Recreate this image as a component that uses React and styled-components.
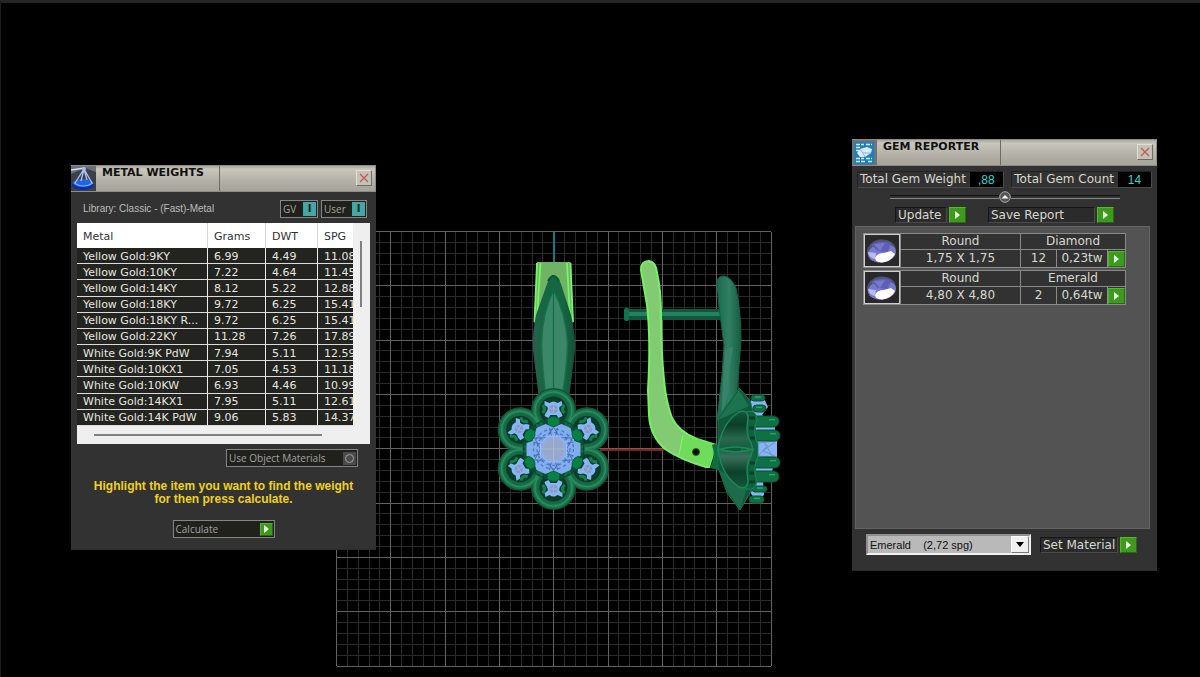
import React, {useState} from 'react'
import styled, {createGlobalStyle} from 'styled-components'

const GlobalStyle = createGlobalStyle`
    * {
        box-sizing: border-box;
    }
    body {
        margin: 0;
        background: #000;
    }
    button {
        margin: 0;
        padding: 0;
        border: 0;
        cursor: pointer;
    }
`

const verdana = '"DejaVu Sans", Verdana, sans-serif'
const arial = '"Liberation Sans", Arial, sans-serif'
const tahoma = '"Open Sans", Tahoma, sans-serif'

const Desktop = styled.main`
    position: relative;
    min-height: 100vh;
    overflow: hidden;
    background: #000;
    border-top: 3px solid #262626;
    border-left: 1px solid #1c1c1c;
    font-family: ${verdana};
    font-size: 12px;
    color: #d8d8d0;
`

const Viewport = styled.svg`
    position: absolute;
    left: 329px;
    top: 222px;
    width: 460px;
    height: 450px;
`

const Window = styled.section`
    position: absolute;
    left: ${p => p.$x}px;
    top: ${p => p.$y}px;
    width: ${p => p.$width}px;
    background: #323232;
    border-bottom: 1px solid #2a2a2a;
`

const TitleBar = styled.header`
    display: flex;
    height: 27px;
    background: linear-gradient(#a9a79e 0, #c9c6bc 3px, #b3b1a7 60%, #a5a39a 100%);
    border: 1px solid #8f8d86;
    border-left: 0;
`

const TitleIcon = styled.svg`
    width: 25px;
    height: 25px;
    flex: none;
`

const Title = styled.h1`
    width: 124px;
    margin: 0;
    padding-left: 6px;
    border-right: 1px solid #6d6b66;
    font-size: 11px;
    line-height: 14px;
    font-weight: bold;
    color: #111;
    white-space: nowrap;
`

const CloseButton = styled.button`
    display: flex;
    align-items: center;
    justify-content: center;
    width: 16px;
    height: 16px;
    margin: 4px 3px 0 auto;
    background: #c4c1b8;
    border: 1px solid #e2dfd6;
    border-right-color: #6e6c66;
    border-bottom-color: #6e6c66;
`

const WindowTitle = ({icon, children}) => (
    <TitleBar>
        {icon}
        <Title>{children}</Title>
        <CloseButton aria-label="Close">
            <svg width="10" height="10" viewBox="0 0 10 10">
                <path d="M1 1L9 9M9 1L1 9" stroke="#c05c58" strokeWidth="1.3" />
            </svg>
        </CloseButton>
    </TitleBar>
)

const GreenArrow = styled.span`
    display: flex;
    align-items: center;
    justify-content: center;
    flex: none;
    width: ${p => (p.$small ? 13 : 17)}px;
    height: ${p => (p.$small ? 13 : 16)}px;
    background: #3d9a1c;
    border: 1px solid #58b534;
    border-right-color: #256b10;
    border-bottom-color: #256b10;
`

const Arrow = ({small}) => (
    <GreenArrow $small={small}>
        <svg width="5" height="8" viewBox="0 0 5 8">
            <path d="M0 0L5 4L0 8Z" fill="#eaffdf" />
        </svg>
    </GreenArrow>
)

// metal weights

const MetalBody = styled.div`
    padding: 8px 6px 11px;
`

const LibraryRow = styled.div`
    display: flex;
    align-items: center;
    gap: 3px;
    height: 17px;
    margin-bottom: 6px;
    padding: 0 3px 0 6px;
    font-family: ${arial};
    font-size: 10px;
    color: #bdbdbd;
`

const LibraryName = styled.span`
    flex: 1;
`

const BoxButton = styled.button`
    display: flex;
    align-items: center;
    justify-content: space-between;
    width: ${p => p.$width}px;
    height: 18px;
    padding: 0 1px 0 2px;
    background: #20201d;
    border: 1px solid #858585;
    font-family: ${tahoma};
    font-size: 10px;
    line-height: 14px;
    color: #a3a3a3;
`

const ToggleMark = styled.span`
    width: 13px;
    height: 14px;
    background: #43a7a2;
    color: #0b2220;
    font-family: ${verdana};
    font-weight: bold;
    text-align: center;
`

const RoundMark = styled.span`
    display: flex;
    align-items: center;
    justify-content: center;
    width: 13px;
    height: 13px;
    background: #4b4b4b;
    &::before {
        content: '';
        width: 7px;
        height: 7px;
        border: 1px solid #a0a0a0;
        border-radius: 50%;
    }
`

const TableFrame = styled.div`
    display: grid;
    grid-template-columns: 1fr 17px;
    grid-template-rows: 203px 18px;
    background: #efefef;
`

const TableClip = styled.div`
    overflow: hidden;
`

const MetalTable = styled.table`
    width: 299px;
    height: 203px;
    table-layout: fixed;
    border-collapse: separate;
    border-spacing: 0;
    font-size: 11px;
    line-height: 13px;
    th {
        height: 25px;
        padding: 2px 0 0 6px;
        background: #fff;
        border-right: 1px solid #d5d5d5;
        font-weight: normal;
        text-align: left;
        color: #333;
    }
    td {
        padding: 1px 4px 0 6px;
        overflow: hidden;
        text-overflow: ellipsis;
        white-space: nowrap;
        background: #23231f;
        border-right: 1px solid #ececec;
        border-bottom: 1px solid #dcdcdc;
        color: #e6e6e0;
    }
`

const VerticalBar = styled.div`
    width: 2px;
    height: 66px;
    margin: 18px 0 0 7px;
    background: #808080;
`

const HorizontalBar = styled.div`
    width: 228px;
    height: 2px;
    margin: 8px 0 0 17px;
    background: #808080;
`

const OptionRow = styled.div`
    display: flex;
    justify-content: flex-end;
    padding: 5px 12px 0 0;
`

const Hint = styled.p`
    margin: 13px 0 14px;
    font-family: ${arial};
    font-size: 12px;
    line-height: 13px;
    font-weight: bold;
    text-align: center;
    color: #f0d21c;
`

const CalculateRow = styled.div`
    display: flex;
    justify-content: center;
`

const metals = [
    ['Yellow Gold:9KY', '6.99', '4.49', '11.08'],
    ['Yellow Gold:10KY', '7.22', '4.64', '11.45'],
    ['Yellow Gold:14KY', '8.12', '5.22', '12.88'],
    ['Yellow Gold:18KY', '9.72', '6.25', '15.41'],
    ['Yellow Gold:18KY R...', '9.72', '6.25', '15.41'],
    ['Yellow Gold:22KY', '11.28', '7.26', '17.89'],
    ['White Gold:9K PdW', '7.94', '5.11', '12.59'],
    ['White Gold:10KX1', '7.05', '4.53', '11.18'],
    ['White Gold:10KW', '6.93', '4.46', '10.99'],
    ['White Gold:14KX1', '7.95', '5.11', '12.61'],
    ['White Gold:14K PdW', '9.06', '5.83', '14.37'],
]

const ScaleIcon = () => (
    <TitleIcon viewBox="0 0 25 25">
        <rect width="25" height="25" fill="#3d4147" />
        <path d="M0 0H25V6L14 2L0 8Z" fill="#6b7078" />
        <ellipse cx="12" cy="19" rx="11" ry="5" fill="#0b2fa8" />
        <ellipse cx="12" cy="17" rx="10" ry="4" fill="#2462ee" />
        <path d="M3 17Q12 23 22 17" stroke="#79b0ff" strokeWidth="1.2" fill="none" />
        <path d="M13 3L4 17M13 3L21 17M13 3L10 15M13 3L16 14" stroke="#a9c6f2" strokeWidth="1.3" fill="none" />
        <path d="M0 4L14 2" stroke="#cfe0f5" strokeWidth="1.5" />
        <circle cx="13" cy="3" r="2" fill="#9fbdf0" />
    </TitleIcon>
)

const MetalWeights = () => (
    <Window $x={70} $y={162} $width={305}>
        <WindowTitle icon={<ScaleIcon />}>METAL WEIGHTS</WindowTitle>
        <MetalBody>
            <LibraryRow>
                <LibraryName>Library: Classic - (Fast)-Metal</LibraryName>
                <BoxButton $width={38}>
                    GV <ToggleMark>I</ToggleMark>
                </BoxButton>
                <BoxButton $width={46}>
                    User <ToggleMark>I</ToggleMark>
                </BoxButton>
            </LibraryRow>
            <TableFrame>
                <TableClip>
                    <MetalTable>
                        <colgroup>
                            <col width="131" />
                            <col width="58" />
                            <col width="52" />
                            <col width="58" />
                        </colgroup>
                        <thead>
                            <tr>
                                <th>Metal</th>
                                <th>Grams</th>
                                <th>DWT</th>
                                <th>SPG</th>
                            </tr>
                        </thead>
                        <tbody>
                            {metals.map(row => (
                                <tr key={row[0]}>
                                    {row.map((cell, i) => <td key={i}>{cell}</td>)}
                                </tr>
                            ))}
                        </tbody>
                    </MetalTable>
                </TableClip>
                <VerticalBar />
                <HorizontalBar />
            </TableFrame>
            <OptionRow>
                <BoxButton $width={132}>
                    Use Object Materials <RoundMark />
                </BoxButton>
            </OptionRow>
            <Hint>
                Highlight the item you want to find the weight
                <br />
                for then press calculate.
            </Hint>
            <CalculateRow>
                <BoxButton $width={102}>
                    Calculate <Arrow small />
                </BoxButton>
            </CalculateRow>
        </MetalBody>
    </Window>
)

// gem reporter

const GemBody = styled.div`
    padding: 5px 7px 15px 3px;
`

const Totals = styled.dl`
    display: flex;
    justify-content: space-between;
    margin: 0 -2px 0 2px;
`

const Total = styled.div`
    display: flex;
    height: 17px;
    border: 1px solid #222;
    border-right-color: #4a4a4a;
    border-bottom-color: #4a4a4a;
    line-height: 14px;
    white-space: nowrap;
    dt {
        padding: 0 4px 0 2px;
    }
    dd {
        width: 33px;
        margin: 0;
        background: #000;
        font-family: ${arial};
        line-height: 16px;
        text-align: center;
        color: #35d6cf;
    }
`

const Divider = styled.div`
    display: flex;
    align-items: center;
    height: 12px;
    margin: 3px 30px 4px 35px;
    &::before,
    &::after {
        content: '';
        flex: 1;
        height: 2px;
        border-top: 1px solid #111;
        border-bottom: 1px solid #888;
    }
`

const Collapse = styled.button`
    display: flex;
    width: 12px;
    height: 12px;
    background: none;
`

const Actions = styled.div`
    display: flex;
    gap: 22px;
    padding-left: 40px;
    margin-bottom: 3px;
`

const LabelButton = styled.button`
    display: flex;
    align-items: center;
    gap: 2px;
    background: none;
    font-family: ${verdana};
    font-size: 12px;
    color: #d8d8d0;
`

const LabelText = styled.span`
    width: ${p => p.$width}px;
    height: 16px;
    padding-left: 2px;
    background: #2b2b2b;
    border: 1px solid #4a4a4a;
    border-top-color: #161616;
    border-left-color: #161616;
    line-height: 14px;
    text-align: left;
    white-space: nowrap;
`

const GemList = styled.div`
    display: flex;
    flex-direction: column;
    gap: 2px;
    min-height: 303px;
    padding: 6px 7px;
    background: #535353;
    border: 1px solid #636363;
`

const GemTable = styled.table`
    width: 262px;
    table-layout: fixed;
    border-collapse: collapse;
    line-height: 15px;
    td {
        height: 16px;
        padding: 0;
        border: 1px solid #8a8a8a;
        background: #323232;
        text-align: center;
        white-space: nowrap;
    }
`

const GemThumb = styled.svg`
    display: block;
    width: 36px;
    height: 33px;
    outline: 1px solid #d0d0d0;
    outline-offset: -1px;
`

const ShowButton = styled.button`
    display: block;
    background: none;
`

const MaterialRow = styled.div`
    display: flex;
    align-items: center;
    gap: 9px;
    padding: 5px 0 0 11px;
`

const SelectFrame = styled.div`
    position: relative;
    width: 165px;
    height: 21px;
    border: 2px solid #8f8f8f;
    border-right-color: #f2f2f2;
    border-bottom-color: #f2f2f2;
`

const MaterialSelect = styled.select`
    appearance: none;
    display: block;
    width: 100%;
    height: 17px;
    padding: 0 20px 0 2px;
    border: 0;
    border-radius: 0;
    background: #b9b9b9;
    font-family: ${arial};
    font-size: 11px;
    color: #111;
`

const SelectArrow = styled.span`
    position: absolute;
    top: 0;
    right: 0;
    display: flex;
    align-items: center;
    justify-content: center;
    width: 18px;
    height: 17px;
    background: #f0f0f0;
    border: 1px solid #fff;
    border-right-color: #777;
    border-bottom-color: #777;
    pointer-events: none;
`

const gems = [
    {shape: 'Round', size: '1,75 X 1,75', material: 'Diamond', count: 12, weight: '0,23tw'},
    {shape: 'Round', size: '4,80 X 4,80', material: 'Emerald', count: 2, weight: '0,64tw'},
]

const ReportIcon = () => (
    <TitleIcon viewBox="0 0 25 25">
        <rect width="25" height="25" fill="#6f7276" />
        <rect x="2" y="2" width="20" height="22" fill="#1f7fb8" />
        <path
            d="M4 4.500H12M4 7.500H9M14 4.500H20M4 10.500H7M4 18.500H12M4 21.500H14M14 18.500H20M16 21.500H20"
            stroke="#cdeaf8"
            strokeWidth="1.600"
            strokeDasharray="4 1"
        />
        <path d="M5 13L8 9L15 7L20 9L19 13L13 17L8 17Z" fill="#dcebf2" />
        <path d="M8 9L11 13L19 13M11 13L13 17" stroke="#8fb6ca" fill="none" />
    </TitleIcon>
)

const Gem = () => (
    <GemThumb viewBox="0 0 36 33">
        <rect width="36" height="33" fill="#292929" />
        <ellipse cx="17.500" cy="17" rx="14.500" ry="11.500" fill="#50526f" transform="rotate(-8 17.500 17)" />
        <ellipse cx="18" cy="19" rx="14" ry="9.500" fill="#7679cc" transform="rotate(-8 18 19)" />
        <path d="M7 11Q16 5 27 9L24 18L14 17Z" fill="#5d60b4" />
        <path d="M10 10L16 17L21 9" fill="#7679cc" />
        <path d="M4 18L12 19L11 25Q5 24 4 18Z" fill="#b8bbf2" />
        <path d="M11 24Q13 19 20 19L27 17L31 20Q28 27 18 28.500Q11 28 11 24Z" fill="#fff" />
    </GemThumb>
)

const GemReporter = () => {
    const [material, setMaterial] = useState('emerald')
    return (
        <Window $x={851} $y={136} $width={305}>
            <WindowTitle icon={<ReportIcon />}>GEM REPORTER</WindowTitle>
            <GemBody>
                <Totals>
                    <Total>
                        <dt>Total Gem Weight</dt>
                        <dd>,88</dd>
                    </Total>
                    <Total>
                        <dt>Total Gem Count</dt>
                        <dd>14</dd>
                    </Total>
                </Totals>
                <Divider>
                    <Collapse aria-label="Collapse">
                        <svg width="12" height="12" viewBox="0 0 12 12">
                            <circle cx="6" cy="6" r="5.300" fill="#555" stroke="#aaa" />
                            <path d="M2.500 7.500L6 4L9.500 7.500Z" fill="#fff" />
                        </svg>
                    </Collapse>
                </Divider>
                <Actions>
                    <LabelButton>
                        <LabelText $width={52}>Update</LabelText>
                        <Arrow />
                    </LabelButton>
                    <LabelButton>
                        <LabelText $width={107}>Save Report</LabelText>
                        <Arrow />
                    </LabelButton>
                </Actions>
                <GemList>
                    {gems.map(gem => (
                        <GemTable key={gem.material}>
                            <colgroup>
                                <col width="37" />
                                <col width="120" />
                                <col width="36" />
                                <col width="51" />
                                <col width="18" />
                            </colgroup>
                            <tbody>
                                <tr>
                                    <td rowSpan={2}><Gem /></td>
                                    <td>{gem.shape}</td>
                                    <td colSpan={3}>{gem.material}</td>
                                </tr>
                                <tr>
                                    <td>{gem.size}</td>
                                    <td>{gem.count}</td>
                                    <td>{gem.weight}</td>
                                    <td>
                                        <ShowButton aria-label={`Show ${gem.material}`}>
                                            <Arrow />
                                        </ShowButton>
                                    </td>
                                </tr>
                            </tbody>
                        </GemTable>
                    ))}
                </GemList>
                <MaterialRow>
                    <SelectFrame>
                        <MaterialSelect
                            aria-label="Material"
                            value={material}
                            onChange={e => setMaterial(e.target.value)}
                        >
                            <option value="emerald">{'Emerald\u00a0\u00a0\u00a0\u00a0(2,72 spg)'}</option>
                        </MaterialSelect>
                        <SelectArrow>
                            <svg width="8" height="5" viewBox="0 0 8 5">
                                <path d="M0 0H8L4 5Z" fill="#000" />
                            </svg>
                        </SelectArrow>
                    </SelectFrame>
                    <LabelButton>
                        <LabelText $width={78}>Set Material</LabelText>
                        <Arrow />
                    </LabelButton>
                </MaterialRow>
            </GemBody>
        </Window>
    )
}

// modelling viewport

const GRID_X = 336.5
const GRID_Y = 231.5
const GRID_SIZE = 434.5

const gridLines = Array.from({length: 41}, (_, i) => ({
    offset: Math.round((i * GRID_SIZE) / 40),
    major: i % 5 === 0,
})).sort((a, b) => a.major - b.major)

const Grid = () => (
    <g shapeRendering="crispEdges">
        {gridLines.map(({offset, major}) => (
            <path
                key={offset}
                d={`M${GRID_X + offset} ${GRID_Y}v${GRID_SIZE}M${GRID_X} ${GRID_Y + offset}h${GRID_SIZE}`}
                stroke={major ? '#636363' : '#2b2b2b'}
            />
        ))}
        <path d="M553.500 232V264" stroke="#167a84" strokeWidth="2" />
        <path d="M600 449.500H664" stroke="#8c1c1c" strokeWidth="2" />
    </g>
)

const angles = [0, 60, 120, 180, 240, 300]

const Lobes = ({r, ...rest}) =>
    angles.map(a => <circle key={a} cy="-38.500" r={r} transform={`rotate(${a})`} {...rest} />)

const Flower = () => (
    <g transform="translate(553.500 449)">
        <Lobes r={22.5} fill="#0f5637" />
        <Lobes r={21} fill="#1a744c" />
        <Lobes r={18.5} fill="none" stroke="#2b8d62" strokeWidth="1.500" />
        <Lobes r={16.5} fill="#146842" />
        <Lobes r={14} fill="#0a3c28" />
        <circle r="31" fill="#0d4c32" />
        {angles.map(a => (
            <g key={a} transform={`rotate(${a})`}>
                <path
                    d="M-9 -48L-4 -46Q0 -49 4 -46L8 -48L9 -44L6 -42Q5 -39 8 -36L9 -33L5 -31L3 -34H-3L-5 -31L-9 -33L-8 -36Q-5 -39 -6 -42L-9 -44Z"
                    fill="#86b6f6"
                />
                <circle cy="-40" r="4" fill="#8799c8" />
                <path d="M-4 -40H4M0 -44V-36" stroke="#a8c2ec" strokeWidth=".6" />
                <path d="M-11 -44Q-7 -40 -11 -36M11 -44Q7 -40 11 -36" stroke="#12804f" strokeWidth="3" fill="none" />
                <path d="M-14 -18L-12 -27M14 -18L12 -27" stroke="#146842" strokeWidth="3" />
            </g>
        ))}
        <path
            d="M-17 -21L-8 -25L0 -22L8 -25L17 -21L21 -8L27 -6V7L21 9L17 21L8 25L0 22L-8 25L-17 21L-21 9L-27 7V-6L-21 -8Z"
            fill="#7fadf0"
        />
        <g fill="none" stroke="#4a75b8" strokeWidth="1.200" strokeDasharray="3 3">
            <circle r="20" />
            <circle r="16.500" />
        </g>
        {angles.map(a => (
            <path
                key={a}
                d="M-11 -19L0 -13L11 -19M-14 -16L-8 -10M14 -16L8 -10"
                stroke="#4567a6"
                strokeWidth=".8"
                fill="none"
                transform={`rotate(${a + 30})`}
            />
        ))}
        <path d="M-6 -13H6L13 -5V6L6 13H-6L-13 6V-5Z" fill="#91ace0" stroke="#98c0fa" />
        <circle r="10.500" fill="#97a8cc" />
        <path d="M-12 0H12M0 -12V12" stroke="#a9bbdc" strokeWidth=".8" />
        {angles.map(a => (
            <path
                key={a}
                d="M-6 -30Q0 -35 6 -30L6 -25Q0 -20 -6 -25Z"
                fill="#087f43"
                stroke="#075a35"
                strokeWidth=".7"
                transform={`rotate(${a})`}
            />
        ))}
    </g>
)

const FrontView = () => (
    <g>
        <path d="M537 262H570.500L573.500 322L553 345L534 322Z" fill="#6fb464" />
        <path d="M537 263L534.500 322M540.500 263L537 318M570.500 263L573 322M567 263L570 318" stroke="#78f468" strokeWidth="1.800" />
        <path
            d="M553.500 275Q558 276 561 284L571 315Q576 337 575 350L569 399H539L533 350Q532 334 536 315L547 284Q549 276 553.500 275Z"
            fill="url(#leaf)"
        />
        <path d="M553.500 290Q542 314 541.500 343Q542 369 546 397H562Q567 369 567.500 343Q566 314 553.500 290Z" fill="#3b8768" stroke="#137248" strokeWidth="1.500" />
        <path d="M553.500 290V397" stroke="#126c48" strokeWidth="1.200" />
        <path d="M548 281Q553.500 271 559 281" stroke="#0d543a" strokeWidth="2" fill="none" />
        <Flower />
    </g>
)

const sidePetal = 'M718 450Q721 424 739 412Q748 409 748 419Q745 434 751 443L753 450Q736 444 718 450Z'

const SideView = () => (
    <g>
        <rect x="626" y="309" width="96" height="11" fill="#11573e" />
        <path d="M627 314H722" stroke="#248161" strokeWidth="4" />
        <rect x="624" y="308" width="5" height="13" rx="2" fill="#147250" />
        <path
            d="M641 270Q641 261 649 261Q656 262 657 273Q661 290 661 315Q661 350 664 380Q666 402 672 418Q679 432 697 439L716 445L709 467L706 467Q681 460 665 449Q650 436 649 415L648 390Q651 340 647 305Z"
            fill="#83cb72"
            stroke="#76f165"
            strokeWidth="2"
        />
        <path d="M681 434L716 445L709 467L679 455Z" fill="#6fdc5c" />
        <path d="M679 455L683 435" stroke="#8df07c" />
        <circle cx="696" cy="452" r="3.500" fill="#08130b" stroke="#3c572c" />
        <path d="M712 445Q717 442 721 449L719 470L710 468Q716 456 712 445Z" fill="#0e6e43" />
        <path
            d="M717 283Q717 276 724 276Q731 277 736 288Q741 312 741 340L738 380L734 420H717L722 375L724 345L719 307Z"
            fill="url(#arm)"
            stroke="#106344"
        />
        <path d="M725 350Q733 345 733 348Q728 375 729 390L722 415Q722 385 725 350Z" fill="#388369" />

        <path d="M755 396L763 396L768 407L762 415L775 424V440H777V458L772 471L763 481L764 495L756 502L749 490L750 402Z" fill="#86b4f5" />
        <path d="M758 443L776 441L763 451L777 457L758 456L768 445M764 442L773 457" stroke="#6f8fc8" strokeWidth="1" fill="none" />

        <path d="M739 388L750 400L753 412L757 440V462L752 490L740 510L727 493L718 467V418Z" fill="#11583b" stroke="#13764b" />
        <path d="M739 390L749 406L718 420Z" fill="#1d7250" />
        <path d="M719 470L747 489L740 509L728 492Z" fill="#1c6b4b" />
        {[
            [751, 395, 14, 6],
            [753, 405, 13, 7],
            [750, 416, 29, 11],
            [752, 430, 28, 11],
            [752, 457, 28, 11],
            [750, 471, 29, 11],
            [752, 486, 15, 6],
            [749, 496, 15, 7],
        ].map(([x, y, w, h]) => (
            <g key={y}>
                <rect x={x} y={y} width={w} height={h} rx={h / 2} fill="#0e7143" stroke="#0b5031" />
                <path d={`M${x + w - 10} ${y + h / 3}h6`} stroke="#32a068" strokeWidth="1.500" />
            </g>
        ))}
        <path
            d="M746 412Q756 409 757 419Q752 434 758 444V457Q752 467 757 481Q756 491 746 489L742 450Z"
            fill="#0f623f"
            stroke="#1b8756"
        />
        <path d="M749 418h6M749 428h5M750 438h5M750 463h5M749 473h5M749 482h6" stroke="#0a3f29" strokeWidth="3" />
        <path d={sidePetal} fill="url(#petal)" stroke="#1c8757" strokeWidth="1.500" />
        <path d={sidePetal} fill="url(#petalLow)" stroke="#1c8757" strokeWidth="1.500" transform="matrix(1 0 0 -1 0 899)" />
    </g>
)

const ModelView = () => (
    <Viewport viewBox="330 225 460 450" role="img" aria-label="Earring model">
        <defs>
            <linearGradient id="leaf">
                <stop offset="0" stopColor="#2a5f4b" />
                <stop offset=".3" stopColor="#156643" />
                <stop offset=".7" stopColor="#156643" />
                <stop offset="1" stopColor="#174f3b" />
            </linearGradient>
            <linearGradient id="arm">
                <stop offset="0" stopColor="#1b6a4d" />
                <stop offset=".5" stopColor="#307e64" />
                <stop offset="1" stopColor="#165e42" />
            </linearGradient>
            <linearGradient id="petal" x1="0" y1="0" x2="0" y2="1">
                <stop offset="0" stopColor="#14573c" />
                <stop offset=".35" stopColor="#0a3d29" />
                <stop offset=".7" stopColor="#27684c" />
                <stop offset="1" stopColor="#155c3f" />
            </linearGradient>
            <linearGradient id="petalLow" x1="0" y1="0" x2="0" y2="1">
                <stop offset="0" stopColor="#14573c" />
                <stop offset=".4" stopColor="#0b402b" />
                <stop offset=".8" stopColor="#37705a" />
                <stop offset="1" stopColor="#1c6145" />
            </linearGradient>
        </defs>
        <Grid />
        <FrontView />
        <SideView />
    </Viewport>
)

const App = () => (
    <>
        <GlobalStyle />
        <Desktop>
            <ModelView />
            <MetalWeights />
            <GemReporter />
        </Desktop>
    </>
)

export default App
